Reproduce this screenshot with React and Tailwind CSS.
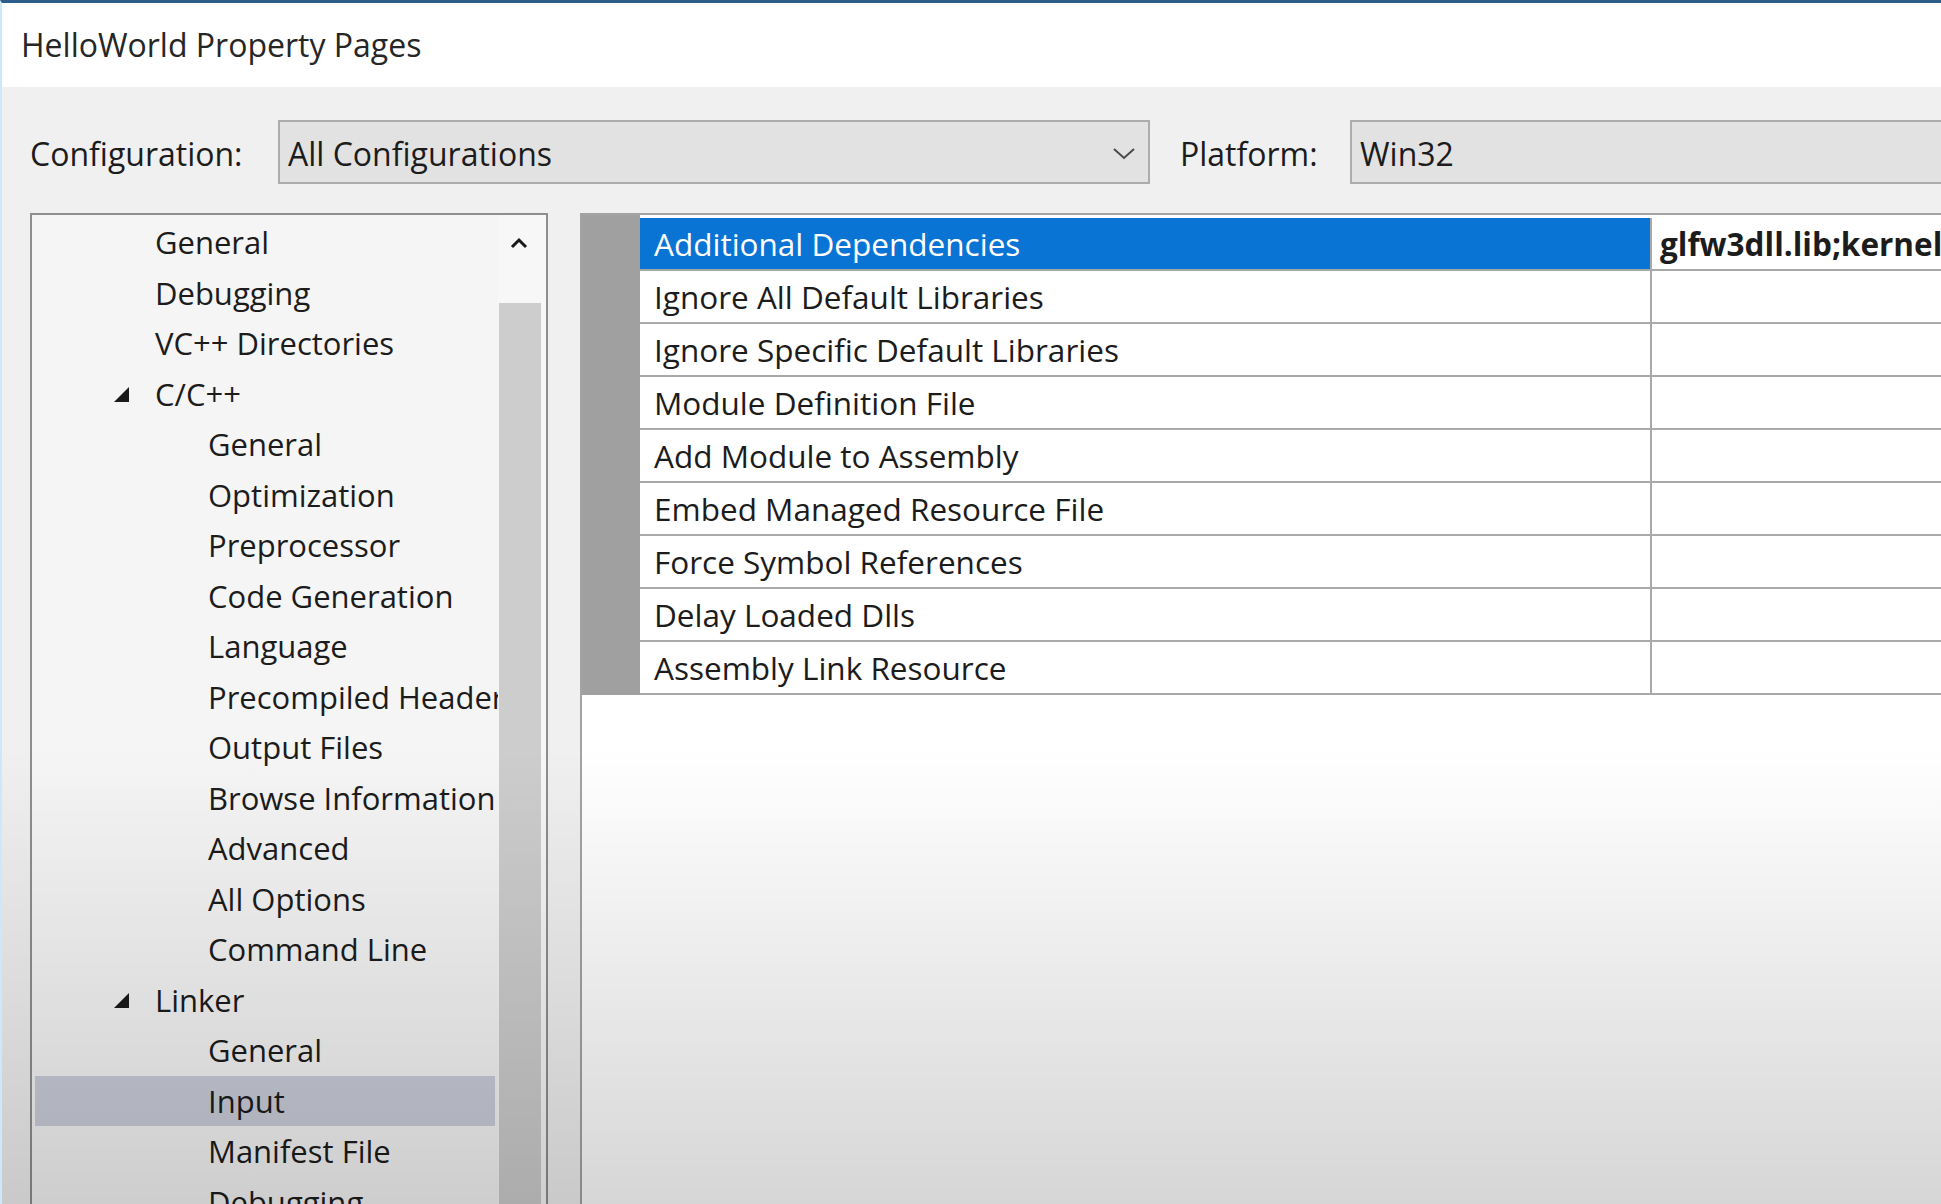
import React from "react";

const tree = [
  { label: "General", level: 1 },
  { label: "Debugging", level: 1 },
  { label: "VC++ Directories", level: 1 },
  { label: "C/C++", level: 1, open: true },
  { label: "General", level: 2 },
  { label: "Optimization", level: 2 },
  { label: "Preprocessor", level: 2 },
  { label: "Code Generation", level: 2 },
  { label: "Language", level: 2 },
  { label: "Precompiled Headers", level: 2 },
  { label: "Output Files", level: 2 },
  { label: "Browse Information", level: 2 },
  { label: "Advanced", level: 2 },
  { label: "All Options", level: 2 },
  { label: "Command Line", level: 2 },
  { label: "Linker", level: 1, open: true },
  { label: "General", level: 2 },
  { label: "Input", level: 2, selected: true },
  { label: "Manifest File", level: 2 },
  { label: "Debugging", level: 2 },
];

const props = [
  "Additional Dependencies",
  "Ignore All Default Libraries",
  "Ignore Specific Default Libraries",
  "Module Definition File",
  "Add Module to Assembly",
  "Embed Managed Resource File",
  "Force Symbol References",
  "Delay Loaded Dlls",
  "Assembly Link Resource",
];

function App() {
  return (
    <div className="relative w-[1941px] h-[1204px] overflow-hidden flex flex-col bg-[#f0f0f0] border-t-[3px] border-t-[#2c5d8b] border-l-2 border-l-[#cbe9f6] font-['Open_Sans',sans-serif] text-[31.5px] text-[#1c1c1c]">
      {/* title bar */}
      <div className="h-[84px] shrink-0 bg-white flex items-center pl-[19px] text-[32px] text-[#262626]">
        HelloWorld Property Pages
      </div>

      {/* configuration row */}
      <div className="flex items-center pl-[28px] pt-[33px] shrink-0 text-[32px]">
        <div className="w-[248px] shrink-0 pt-[3px]">Configuration:</div>
        <div className="w-[872px] h-[64px] shrink-0 border-2 border-[#acacac] bg-[#e2e2e2] flex items-center justify-between pl-[8px] pr-[12px] pt-[3px]">
          <span>All Configurations</span>
          <svg width="24" height="14" viewBox="0 0 24 14">
            <polyline points="2,2 12,11 22,2" fill="none" stroke="#4a4a4a" strokeWidth="2" />
          </svg>
        </div>
        <div className="w-[200px] shrink-0 pl-[30px] pt-[3px]">Platform:</div>
        <div className="w-[700px] h-[64px] shrink-0 border-2 border-[#acacac] bg-[#e2e2e2] flex items-center pl-[8px] pt-[3px]">
          Win32
        </div>
      </div>

      {/* panels */}
      <div className="flex flex-1 min-h-0 pl-[28px] mt-[29px]">
        {/* tree */}
        <div className="w-[518px] shrink-0 border-2 border-b-0 border-[#8e8e8e] bg-[#f5f5f5] flex text-[31px]">
          <div className="flex-1 overflow-hidden pt-[2px]">
            {tree.map((item, i) => (
              <div
                key={i}
                className={`relative h-[50.5px] flex items-center whitespace-nowrap mx-[3px] ${
                  item.selected ? "bg-[#cbcedb]" : ""
                } ${item.level === 1 ? "pl-[120px]" : "pl-[173px]"}`}
              >
                {item.open && (
                  <svg className="absolute left-[78px] top-[17px]" width="17" height="17" viewBox="0 0 17 17">
                    <polygon points="16,1 16,16 1,16" fill="#1a1a1a" />
                  </svg>
                )}
                {item.label}
              </div>
            ))}
          </div>
          <div className="w-[48px] shrink-0 flex flex-col bg-[#f7f7f7]">
            <div className="h-[56px] flex items-center justify-center pr-[6px]">
              <svg width="18" height="12" viewBox="0 0 18 12">
                <polyline points="2,10 9,3 16,10" fill="none" stroke="#1a1a1a" strokeWidth="3" />
              </svg>
            </div>
            <div className="flex-1 mt-[32px] ml-[1px] w-[42px] bg-[#cdcdcd]" />
          </div>
        </div>

        {/* property grid */}
        <div className="flex-1 ml-[32px] border-l-2 border-t-2 border-[#a3a3a3] bg-white flex flex-col">
          <div className="flex">
            <div className="w-[58px] shrink-0 bg-[#a0a0a0]" />
            <div className="flex-1 pt-[3px]">
              {props.map((p, i) => (
                <div key={p} className="h-[53px] flex border-b-2 border-[#a9a9a9]">
                  <div
                    className={`w-[1010px] shrink-0 flex items-center pl-[14px] ${
                      i === 0 ? "bg-[#0a74d5] text-white" : ""
                    }`}
                  >
                    {p}
                  </div>
                  <div className="flex-1 border-l-2 border-[#a9a9a9] flex items-center pl-[8px] font-bold whitespace-nowrap overflow-hidden">
                    {i === 0 ? "glfw3dll.lib;kernel32.lib;user32.lib" : ""}
                  </div>
                </div>
              ))}
            </div>
          </div>
        </div>
      </div>

      {/* darkening toward the bottom of the captured frame */}
      <div className="absolute inset-0 pointer-events-none bg-[linear-gradient(to_bottom,transparent_0%,transparent_62%,rgba(0,0,0,0.16)_100%)]" />
    </div>
  );
}

export default App;
